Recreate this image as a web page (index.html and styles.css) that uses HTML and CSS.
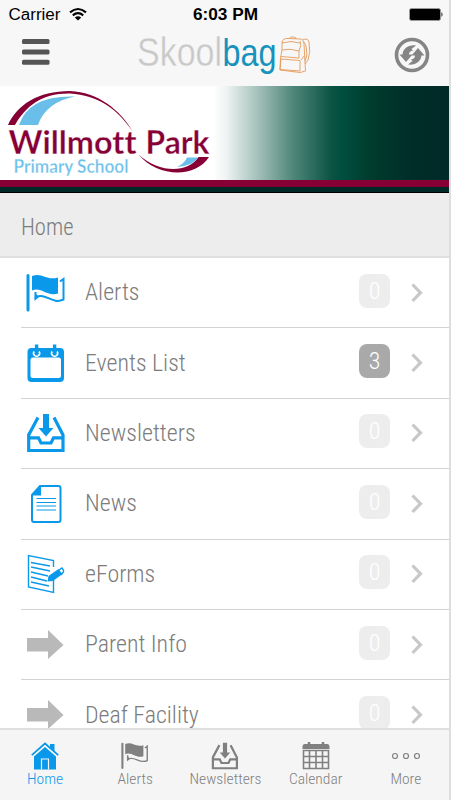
FILE: index.html
```html
<!DOCTYPE html>
<html lang="en">
<head>
<meta charset="utf-8">
<title>Skoolbag</title>
<link rel="stylesheet" href="styles.css">
</head>
<body>
<svg class="defs" width="0" height="0">
  <symbol id="flag" viewBox="0 0 40 40">
    <path d="M2 2.500V37" stroke="currentColor" stroke-width="3" stroke-linecap="round"/>
    <path d="M6 3C16-1 20 8 32 4.500V20.500C21 24 15 13 6 17.500Z" fill="currentColor"/>
    <path d="M34 8.500L37.500 6V26.500C26 32 20 19 9.500 24.500V19" fill="none" stroke="currentColor" stroke-width="2"/>
    <path d="M9 20L13 24L8.500 28Z" fill="currentColor"/>
  </symbol>
  <symbol id="inbox" viewBox="0 0 40 40">
    <path d="M17 1H23V15H27.500L20 23.500L12.500 15H17Z" fill="currentColor"/>
    <path d="M12 4.500L2.700 22V37.500H37V22L28 4.500" fill="none" stroke="currentColor" stroke-width="3.200"/>
    <path d="M2 24.800H12.500L15 30H25L27.500 24.800H38" fill="none" stroke="currentColor" stroke-width="3.200"/>
  </symbol>
  <symbol id="arrow" viewBox="0 0 40 40"><path d="M1 13H22V5L37.500 20L22 34V26.500H1Z" fill="currentColor"/></symbol>
  <symbol id="chev" viewBox="0 0 12 20"><path d="M1.500 1.500L9.500 9.700L1.500 18" fill="none" stroke="currentColor" stroke-width="3.200"/></symbol>
</svg>
<div class="phone">
  <header class="top">
    <div class="status">
      <svg width="451" height="30" viewBox="0 0 451 30">
        <text x="8.500" y="20" class="st" textLength="52" lengthAdjust="spacingAndGlyphs">Carrier</text>
        <g fill="none" stroke="#000" stroke-width="2.100"><path d="M70 12.400Q78 5.600 86 12.400M72.800 15.400Q78 11 83.200 15.400"/></g>
        <path d="M74.800 17.500Q78 14.800 81.200 17.500L78 20.500Z"/>
        <text x="193" y="20" class="st bold" textLength="65" lengthAdjust="spacingAndGlyphs">6:03 PM</text>
        <rect x="409.500" y="8.500" width="31" height="12" rx="2" fill="#000" stroke="#999"/>
        <path d="M441.500 12Q443.500 14.500 441.500 17Z"/>
      </svg>
    </div>
    <div class="nav">
      <svg class="menu" width="28" height="26" viewBox="0 0 28 26" fill="#555"><rect y="0" width="27.500" height="5" rx="1.500"/><rect y="10.500" width="27.500" height="5" rx="1.500"/><rect y="20.700" width="27.500" height="5" rx="1.500"/></svg>
      <svg class="brand" width="180" height="46" viewBox="134 32 180 46">
        <text x="137" y="66" class="skool" textLength="85" lengthAdjust="spacingAndGlyphs">Skool</text>
        <text x="222.500" y="66" class="bag" textLength="54" lengthAdjust="spacingAndGlyphs">bag</text>
        <g fill="none" stroke="#e59a58" stroke-width=".9">
          <path d="M282 50V42Q283 38 288 38.500L301 39Q304 40 304 44L305.500 71L300 72.500L280 70L280.500 58Q281 55 282 50M290 38Q290 36.500 293 37Q296 37 296 39M303 39.500Q308 38 309 42Q311 52 308 60L305 64M304 42Q306 44 306.500 49Q308 55 305 61M282 50Q290 48 299 51V58L281 56.500M299 51Q302 45 300 41M301 60L304 56M282 43Q291 40 300 43"/>
          <path d="M281 59L300 60.500V71L280 69.500Z"/>
        </g>
      </svg>
      <svg class="sync" width="36" height="36" viewBox="0 0 36 36">
        <circle cx="18" cy="18" r="15.500" fill="none" stroke="#858585" stroke-width="3.600"/>
        <g fill="#858585"><path d="M5.500 17.500H8.500C9 12 14 7.500 22 8.500L17.500 12L19 13.500C16 14 15 15.500 15 17.500H18.500L12 25Z"/><path d="M30.500 18.500H27.500C27 24 22 28.500 14 27.500L18.500 24L17 22.500C20 22 21 20.500 21 18.500H17.500L24 11Z"/></g>
      </svg>
    </div>
  </header>
  <div class="banner">
    <svg width="230" height="95" viewBox="0 86 230 95">
      <path d="M8 125C17 105 38 91 70 91C98 92 120 110 132.500 131C117 109 98 95 70 93.500C42 93 26 106 15 125Z" fill="#860035"/>
      <path d="M19 125Q29 95 75 96.500Q46 102 38 125Z" fill="#69bfea"/>
      <path d="M138.500 154.500C158 178 196 178 209 157H198.500C188 173 160 174 138.500 154.500Z" fill="#860035"/>
      <path d="M177 167Q193 166 198 157.500H187Q185 163 177 167Z" fill="#69bfea"/>
      <text x="8.500" y="154" class="school" textLength="128" lengthAdjust="spacingAndGlyphs">Willmott</text>
      <text x="145.500" y="154" class="school" textLength="64" lengthAdjust="spacingAndGlyphs">Park</text>
      <text x="13.500" y="173" class="primary" textLength="115" lengthAdjust="spacingAndGlyphs">Primary School</text>
    </svg>
  </div>
  <h1 class="heading"><span>Home</span></h1>
  <ul class="list">
    <li><svg class="ico"><use href="#flag"/></svg><span class="label">Alerts</span><span class="badge">0</span><svg class="chev"><use href="#chev"/></svg></li>
    <li><svg class="ico" viewBox="0 0 40 40"><rect x="1.500" y="5" width="36.500" height="34" rx="4" fill="currentColor"/><rect x="4.500" y="14.500" width="30.500" height="20.500" rx="2.500" fill="#fff"/><g fill="none" stroke="#fff" stroke-width="1.600"><path d="M8.200 8.500A3 3 0 1 0 13 8.500M26.200 8.500A3 3 0 1 0 31 8.500"/></g><path d="M10.600 1.500V9.500M28.600 1.500V9.500" stroke="currentColor" stroke-width="3.400"/></svg><span class="label">Events List</span><span class="badge on">3</span><svg class="chev"><use href="#chev"/></svg></li>
    <li><svg class="ico"><use href="#inbox"/></svg><span class="label">Newsletters</span><span class="badge">0</span><svg class="chev"><use href="#chev"/></svg></li>
    <li><svg class="ico" viewBox="0 0 40 40"><path d="M14 2H32.500Q34.500 2 34.500 4V36Q34.500 38 32.500 38H8Q6 38 6 36V11Z" fill="none" stroke="currentColor" stroke-width="2"/><path d="M15 2V11.500H5.500Z" fill="currentColor"/><path d="M10.500 14.500H30M10.500 18.500H30M10.500 22H30M10.500 26H30" stroke="currentColor" stroke-width="1.100"/></svg><span class="label">News</span><span class="badge">0</span><svg class="chev"><use href="#chev"/></svg></li>
    <li><svg class="ico" viewBox="0 0 40 40"><g fill="none" stroke="currentColor" stroke-width="1.400"><path d="M27.500 13V6.500L2.500 1.500V33L27.500 38.500V24M5 8.500L24 12M5 13L24 17M5 18L22 22M5 23L21 27M5 28L23 32"/><path d="M33 16L36 14Q38 16 37.500 18L35 21"/></g><path d="M21.500 27.500L22.500 22L32.500 15L36.500 20L27 27Z" fill="currentColor"/></svg><span class="label">eForms</span><span class="badge">0</span><svg class="chev"><use href="#chev"/></svg></li>
    <li><svg class="ico grey"><use href="#arrow"/></svg><span class="label">Parent Info</span><span class="badge">0</span><svg class="chev"><use href="#chev"/></svg></li>
    <li><svg class="ico grey"><use href="#arrow"/></svg><span class="label">Deaf Facility</span><span class="badge">0</span><svg class="chev"><use href="#chev"/></svg></li>
  </ul>
  <nav class="tabs">
    <a class="active"><svg viewBox="0 0 28 28"><path d="M19 2H23.500V10L19 6Z" fill="currentColor"/><path d="M14 5L3 14.500V27.500H25V14.500Z" fill="currentColor"/><path d="M.800 13.200L14 1.500L27.200 13.200" fill="none" stroke="currentColor" stroke-width="1.800"/><path d="M2 14L14 3.500L26 14" fill="none" stroke="#f5f5f5" stroke-width=".9"/><path d="M10.500 27.500V17H17.500V27.500" fill="none" stroke="#f5f5f5" stroke-width="1.200"/></svg><span>Home</span></a>
    <a><svg><use href="#flag"/></svg><span>Alerts</span></a>
    <a><svg><use href="#inbox"/></svg><span>Newsletters</span></a>
    <a><svg viewBox="0 0 28 28"><path d="M3 2H25Q27.500 2 27.500 5V7H.500V5Q.500 2 3 2" fill="currentColor"/><path d="M7 0V4M21 0V4" stroke="currentColor" stroke-width="2.500"/><path d="M1.500 8.500H26.500V26.500H1.500ZM7.500 8V27M14 8V27M20.500 8V27M1 14.500H27M1 20.500H27" fill="none" stroke="currentColor" stroke-width="1.600"/></svg><span>Calendar</span></a>
    <a><svg viewBox="0 0 28 28"><g fill="none" stroke="currentColor" stroke-width="1.200"><circle cx="3" cy="14" r="2.500"/><circle cx="14" cy="14" r="2.500"/><circle cx="25" cy="14" r="2.500"/></g></svg><span>More</span></a>
  </nav>
</div>
</body>
</html>
```
FILE: styles.css
```css
* { box-sizing: border-box; }
body { margin: 0; background: #fff; font-family: "Roboto Condensed", Roboto, sans-serif; font-stretch: condensed; font-weight: 300; }
.defs { position: absolute; }
.phone { width: 451px; height: 800px; display: flex; flex-direction: column; overflow: hidden; border-right: 2px solid #dedede; }
.top { height: 86px; flex: none; background: #f7f7f7; }
.status { height: 30px; }
.status svg { display: block; }
.st { font: 400 16px "Liberation Sans", sans-serif; }
.st.bold { font-weight: 700; }
.nav { height: 56px; display: flex; align-items: flex-start; }
.menu { margin: 9px 0 0 21.500px; }
.brand { margin: 2px 0 0 84.500px; overflow: visible; }
.sync { margin: 7px 0 0 80px; }
.skool { font: 400 41px "Liberation Sans", sans-serif; fill: #c8c8c8; stroke: #f7f7f7; stroke-width: .4px; }
.bag { font: 400 39px "Liberation Sans", sans-serif; fill: #1792bc; }
.banner { height: 107px; flex: none; display: flex; align-items: flex-start; border-bottom: 1px solid #000; background: linear-gradient(#860035 0 7px, #002a27 7px) 0 94px / 100% 13px no-repeat, linear-gradient(90deg, #fff 213px, #eff4f3 226px, #a8c3bd 256px, #4e8779 293px, #0c5444 331px, #004f40 341px, #003c2d 371px, #002d29 413px, #002a27 449px); }
.banner svg { display: block; overflow: visible; }
.school { font: 700 33px Lato, sans-serif; font-variant-ligatures: none; fill: #860035; stroke: #fff; stroke-width: .3px; }
.primary { font: 700 18px Lato, sans-serif; fill: #69bfea; stroke: #fff; stroke-width: .3px; }
.heading { margin: 0; height: 65px; flex: none; padding: 4px 0 0 21px; display: flex; align-items: center; background: #ededed; border-bottom: 2px solid #dfdfdf; font-size: 23.500px; font-weight: 300; color: #7c7c7c; }
.heading span { transform: scaleX(.96); transform-origin: left; }
.list { list-style: none; margin: 0; padding: 0 0 0 21px; flex: 1; min-height: 0; overflow: hidden; }
.list li { height: 70.400px; display: flex; align-items: center; border-bottom: 1px solid #d2d2d2; }
.ico { width: 40px; height: 40px; margin-left: 5px; color: #0a99ea; flex: none; }
.ico.grey { color: #b9b9b9; }
.label { flex: 1; margin: 0 0 2px 18.500px; font-size: 24.500px; color: #7c7c7c; white-space: nowrap; transform: scaleX(.975); transform-origin: left; }
.badge { width: 31px; height: 34px; margin: 0 21px 4px 0; border-radius: 8px; background: #ededed; color: #fff; font-size: 24px; line-height: 34px; text-align: center; }
.badge.on { background: #a9a9a9; }
.chev { width: 12px; height: 20px; margin: 0 26px 0 0; color: #c8c8c8; }
.tabs { height: 72px; flex: none; display: grid; grid-template-columns: repeat(5, 90.200px); background: #f5f5f5; border-top: 2px solid #dfdfdf; color: #808080; }
.tabs a { display: flex; flex-direction: column; align-items: center; padding-top: 12px; font-size: 15.500px; }
.tabs svg { width: 28px; height: 28px; }
.tabs span { line-height: 18px; white-space: nowrap; }
.tabs .active { color: #0a99ea; }
```
